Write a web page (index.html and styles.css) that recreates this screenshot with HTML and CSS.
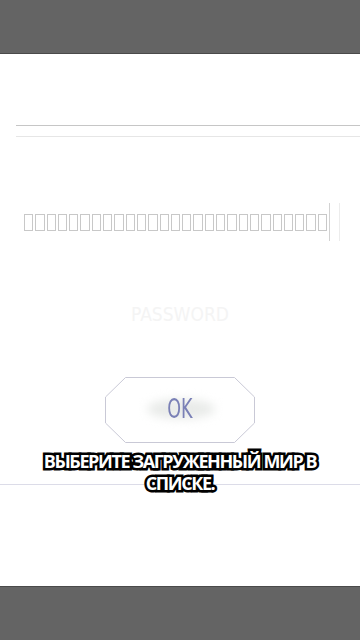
FILE: index.html
```html
<!DOCTYPE html>
<html lang="ru">
<head>
  <meta charset="UTF-8">
  <meta name="viewport" content="width=device-width, initial-scale=1.0">
  <title>Вход</title>
  <link rel="stylesheet" href="styles.css">
</head>
<body>
  <div class="bar top-bar"></div>

  <div class="screen">
    <!-- линии поля -->
    <div class="rule rule-dark"></div>
    <div class="rule rule-light"></div>

    <!-- поле с ненайденными символами -->
    <div class="field">
      <div class="tofu" id="tofu"></div>
      <div class="cursor"></div>
      <div class="cursor faint"></div>
    </div>

    <div class="password">PASSWORD</div>

    <div class="ok-wrap">
      <div class="ok-btn">
        <svg class="ok-frame" width="150" height="66" viewBox="0 0 150 66">
          <polygon points="20.5,0.5 129.5,0.5 149.5,20 149.5,46 129.5,65.5 20.5,65.5 0.5,46 0.5,20"
                   fill="#fff" stroke="#c9c9d6" stroke-width="1"/>
        </svg>
        <span class="ok-glow"></span>
        <span class="ok-label">OK</span>
      </div>
    </div>

    <div class="caption-area">
      <div class="bottom-rule"></div>
      <p class="caption">ВЫБЕРИТЕ ЗАГРУЖЕННЫЙ МИР В СПИСКЕ.</p>
    </div>
  </div>

  <div class="bar bottom-bar"></div>

  <script>
    var tofu = document.getElementById('tofu');
    for (var i = 0; i < 27; i++) {
      var box = document.createElement('span');
      tofu.appendChild(box);
    }
  </script>
</body>
</html>
```

FILE: styles.css
```css
html, body {
  margin: 0;
  padding: 0;
}

body {
  width: 360px;
  height: 640px;
  background: #fff;
  font-family: "Open Sans", "DejaVu Sans", sans-serif;
  overflow: hidden;
}

.bar {
  background: #646464;
}

.top-bar {
  height: 53px;
  border-bottom: 1px solid #4a4a4a;
}

.bottom-bar {
  height: 53px;
  border-top: 1px solid #4a4a4a;
}

.screen {
  height: 461px;
  padding-top: 71px;
  overflow: hidden;
}

.rule {
  margin-left: 16px;
  height: 1px;
}

.rule-dark {
  background: #c6c6c6;
}

.rule-light {
  margin-top: 10px;
  background: #e6e6e6;
}

.field {
  display: flex;
  align-items: center;
  margin-top: 66px;
  padding-left: 24px;
  height: 38px;
}

.tofu {
  display: flex;
  gap: 2px;
}

.tofu span {
  width: 9.3px;
  height: 17px;
  border: 1.6px solid #c8c8c8;
  box-sizing: border-box;
}

.cursor {
  width: 1px;
  height: 38px;
  background: #d2d2d2;
  margin-left: 2px;
}

.cursor.faint {
  margin-left: 9px;
  background: #ececec;
}

.password {
  margin-top: 62px;
  text-align: center;
  font-family: "DejaVu Sans Condensed", "DejaVu Sans", sans-serif;
  font-size: 19px;
  color: #f4f4f4;
}

.ok-wrap {
  display: flex;
  justify-content: center;
  margin-top: 52px;
  padding-right: 1px;
}

.ok-btn {
  position: relative;
  width: 150px;
  height: 66px;
  display: flex;
  align-items: center;
  justify-content: center;
}

.ok-frame {
  position: absolute;
  left: 0;
  top: 0;
}

.ok-glow {
  position: absolute;
  left: 42px;
  top: 22px;
  width: 68px;
  height: 20px;
  border-radius: 50%;
  background: #e9ebe9;
  filter: blur(5px);
}

.ok-label {
  position: relative;
  display: inline-block;
  font-family: "DejaVu Sans Condensed", "DejaVu Sans", sans-serif;
  font-size: 26px;
  color: #7a80b6;
  transform: scaleX(0.75);
  margin-top: -2px;
}

.caption-area {
  position: relative;
}

.bottom-rule {
  position: absolute;
  left: 0;
  right: 0;
  top: 34px;
  height: 1px;
  background: #dcdce8;
}

.caption {
  position: relative;
  margin: 7px 20px 0;
  text-align: center;
  font-family: "Open Sans", sans-serif;
  font-weight: 700;
  font-size: 18px;
  line-height: 22px;
  letter-spacing: -1.4px;
  color: #fff;
  -webkit-text-stroke: 5px #000;
  paint-order: stroke fill;
}
```
